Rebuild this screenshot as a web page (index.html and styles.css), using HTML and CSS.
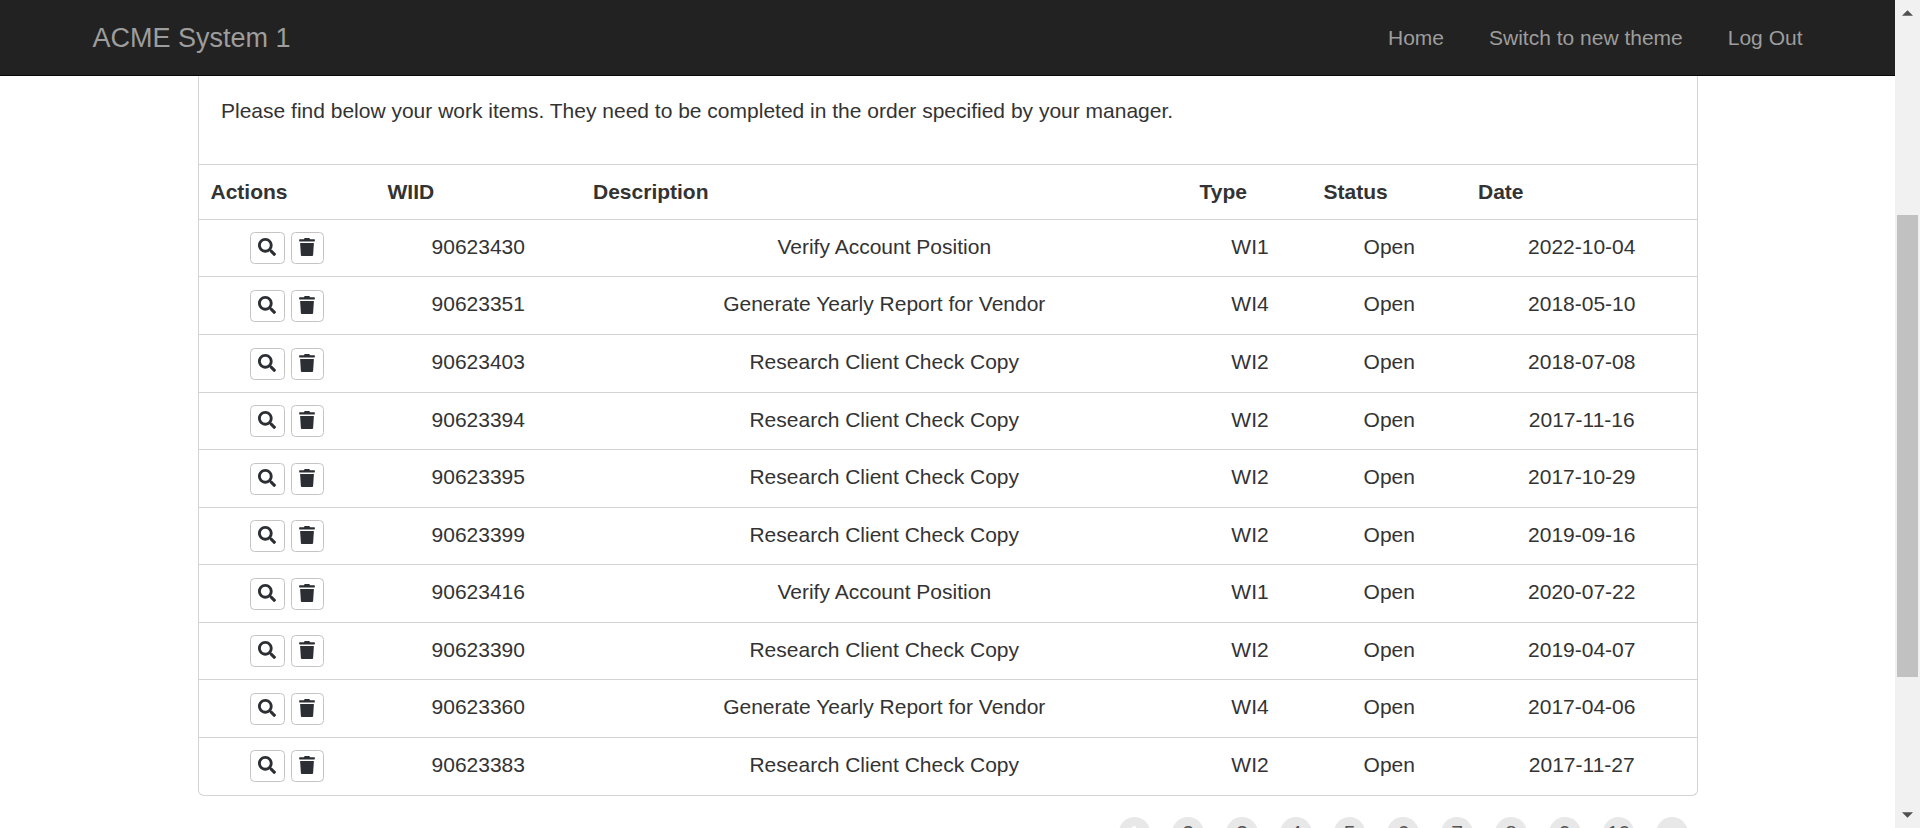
FILE: index.html
```
<!DOCTYPE html>
<html lang="en">
<head>
<meta charset="utf-8">
<title>ACME System 1 - Work Items</title>
<link rel="stylesheet" href="styles.css">
</head>
<body>
<svg class="sprite" aria-hidden="true">
  <symbol id="search" viewBox="0 0 512 512"><path d="M505 442.700L405.300 343c-4.500-4.500-10.600-7-17-7H372c27.600-35.300 44-79.700 44-128C416 93.100 322.900 0 208 0S0 93.100 0 208s93.100 208 208 208c48.300 0 92.700-16.400 128-44v16.300c0 6.400 2.500 12.500 7 17l99.700 99.700c9.400 9.400 24.600 9.400 33.900 0l28.300-28.300c9.400-9.400 9.400-24.600.1-34zM208 336c-70.700 0-128-57.200-128-128 0-70.700 57.200-128 128-128 70.700 0 128 57.200 128 128 0 70.700-57.200 128-128 128z"/></symbol>
  <symbol id="trash" viewBox="0 0 448 512"><path d="M432 32H312l-9.400-18.700A24 24 0 0 0 281.100 0H166.800a23.700 23.700 0 0 0-21.400 13.300L136 32H16A16 16 0 0 0 0 48v32a16 16 0 0 0 16 16h416a16 16 0 0 0 16-16V48a16 16 0 0 0-16-16zM50 486a28 28 0 0 0 28 26h292a28 28 0 0 0 28-26L420 142H28z"/></symbol>
</svg>
<div class="window">
  <div class="page">
    <nav class="navbar">
      <a class="brand">ACME System 1</a>
      <div class="links"><a>Home</a><a>Switch to new theme</a><a>Log Out</a></div>
    </nav>
    <main class="panel">
      <p class="intro">Please find below your work items. They need to be completed in the order specified by your manager.</p>
      <div class="items" id="items">
        <div class="row head"><b>Actions</b><b>WIID</b><b>Description</b><b>Type</b><b>Status</b><b>Date</b></div>
      </div>
    </main>
    <div class="pagination"><span class="current">1</span><span>2</span><span>3</span><span>4</span><span>5</span><span>6</span><span>7</span><span>8</span><span>9</span><span>10</span><span>&gt;</span></div>
  </div>
  <div class="scrollbar">
    <svg class="arrow" viewBox="0 0 12 6"><path d="M0 6 6 0l6 6z"/></svg>
    <div class="thumb"></div>
    <svg class="arrow" viewBox="0 0 12 6"><path d="M0 0h12L6 6z"/></svg>
  </div>
</div>
<script src="items.js"></script>
</body>
</html>
```
FILE: items.js
```
const V = 'Verify Account Position';
const G = 'Generate Yearly Report for Vendor';
const R = 'Research Client Check Copy';
const items = [
  ['90623430', V, 'WI1', '2022-10-04'],
  ['90623351', G, 'WI4', '2018-05-10'],
  ['90623403', R, 'WI2', '2018-07-08'],
  ['90623394', R, 'WI2', '2017-11-16'],
  ['90623395', R, 'WI2', '2017-10-29'],
  ['90623399', R, 'WI2', '2019-09-16'],
  ['90623416', V, 'WI1', '2020-07-22'],
  ['90623390', R, 'WI2', '2019-04-07'],
  ['90623360', G, 'WI4', '2017-04-06'],
  ['90623383', R, 'WI2', '2017-11-27']
];
const icon = (name) => `<svg class="icon ${name}"><use href="#${name}"/></svg>`;
document.getElementById('items').insertAdjacentHTML('beforeend', items.map(([id, text, type, date]) =>
  `<div class="row"><span class="actions"><button class="btn view">${icon('search')}</button><button class="btn delete">${icon('trash')}</button></span><span>${id}</span><span>${text}</span><span>${type}</span><span>Open</span><span>${date}</span></div>`
).join(''));
```
FILE: styles.css
```
* { box-sizing: border-box; }
body {
  margin: 0;
  background: #fff;
  color: #333;
  font: 21px/30px "Liberation Sans", Arial, sans-serif;
}
.sprite { display: none; }
.window { display: flex; height: 828px; overflow: hidden; }
.page { width: 1895px; flex: none; overflow: hidden; }

.navbar {
  display: flex;
  justify-content: space-between;
  height: 76px;
  padding: 0 92.500px;
  background: #222;
  border-bottom: 1px solid #080808;
  color: #9d9d9d;
}
.brand { font-size: 27px; line-height: 77px; }
.links { display: flex; gap: 45px; line-height: 75px; }

.panel {
  width: 1500px;
  height: 720px;
  margin-left: 198px;
  border: 1px solid #d4d4d4;
  border-top: 0;
  border-radius: 0 0 6px 6px;
}
.intro { height: 88px; margin: 0; padding: 20px 22px 0; }

.row {
  display: grid;
  grid-template-columns: 177px 204.500px 607.500px 124px 154.500px 230.500px;
  height: 57.550px;
  padding-top: 12px;
  border-top: 1px solid #d4d4d4;
  text-align: center;
}
.row.head { height: 54.900px; text-align: left; }
.row b { padding-left: 11.500px; }
.row b:nth-child(3) { padding-left: 12.500px; }
.actions { display: flex; justify-content: center; gap: 6px; padding: 0.550px 2px 0 0; }
.btn {
  display: flex;
  justify-content: center;
  height: 32px;
  padding: 5px 0 0;
  background: #fff;
  border: 1px solid #c4c4c4;
  border-radius: 4.500px;
}
.view { width: 35px; }
.delete { width: 33px; }
.icon { height: 18px; fill: #2b2f33; }
.icon.search { width: 18px; }
.icon.trash { width: 16px; }

.pagination {
  display: flex;
  gap: 22px;
  margin: 21px 0 0 1118.500px;
  color: #555;
  font-size: 21px;
}
.pagination span {
  width: 31.800px;
  height: 31.800px;
  border-radius: 50%;
  background: #e8e8e8;
  line-height: 31px;
  text-align: center;
}
.pagination .current { color: #fff; }

.scrollbar {
  display: flex;
  flex-direction: column;
  justify-content: space-between;
  align-items: center;
  width: 25px;
  padding: 10px 0;
  background: #f1f1f1;
}
.arrow { width: 11px; height: 6px; fill: #505050; }
.thumb { width: 21px; height: 462px; margin-top: 64px; background: #c1c1c1; }
```
